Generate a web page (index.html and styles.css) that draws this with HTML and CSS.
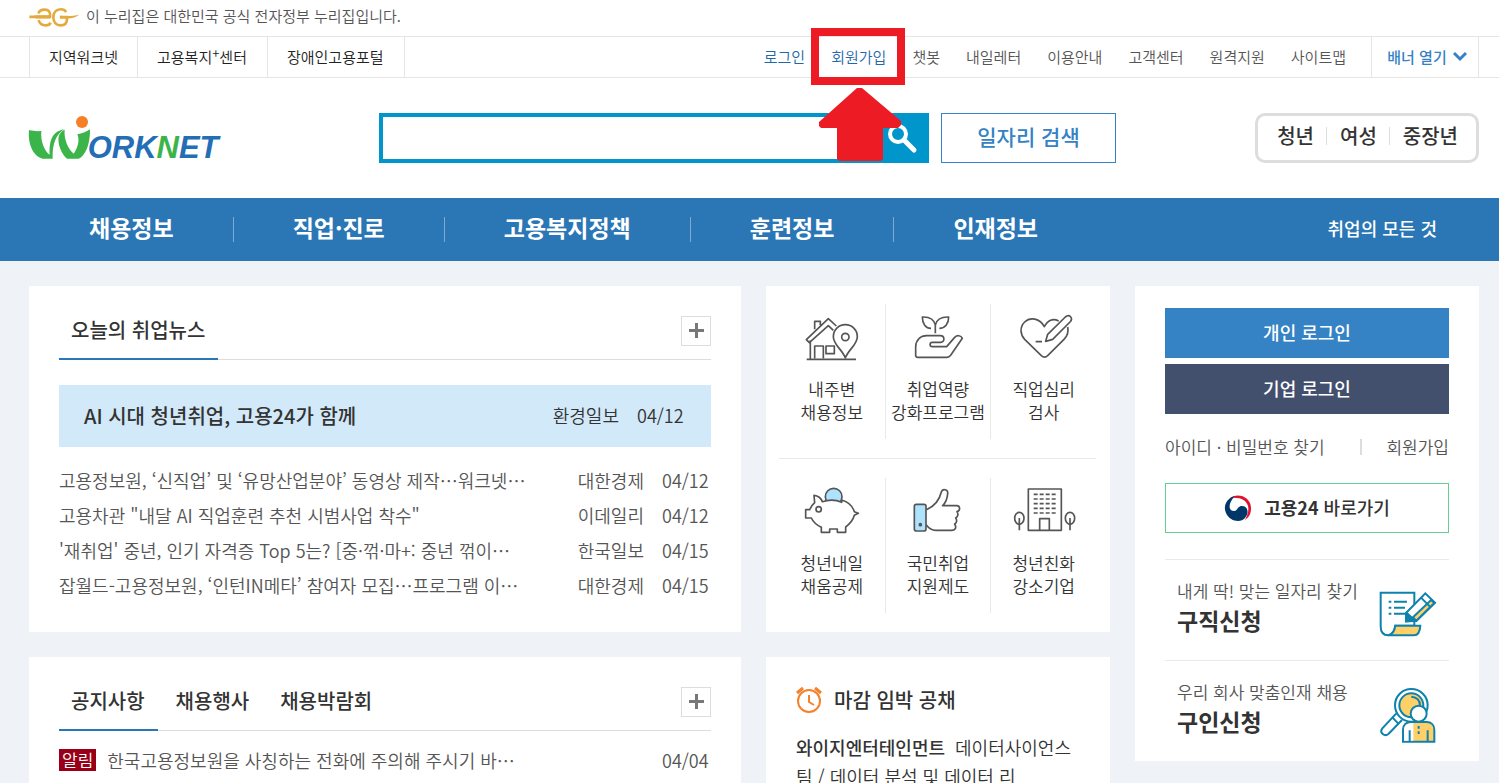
FILE: index.html
```html
<!DOCTYPE html>
<html lang="ko">
<head>
<meta charset="utf-8">
<meta name="viewport" content="width=device-width, initial-scale=1">
<title>워크넷</title>
<link rel="stylesheet" href="styles.css">
</head>
<body>
<div class="official wrap">
  <svg class="official-mark" viewBox="87 20 153 64" aria-hidden="true">
    <g fill="none" stroke="#e3aa3c" stroke-width="8">
      <path d="M87 50H150C152 36 146 28 134 28C122 28 116 34 115 40M115 60C118 70 127 76 137 76C144 76 149 73 152 68"/>
      <path d="M199 35C195 29 190 27 183 27C168 27 160 38 160 51C160 66 169 76 182 76C195 76 202 68 202 54V51H180"/>
    </g>
    <path d="M180 47C205 49 225 47 239 43C230 51 215 56 200 55H180ZM87 50L110 45H150V55H110Z" fill="#e3aa3c"/>
  </svg>
  <p class="official-text">이 누리집은 대한민국 공식 전자정부 누리집입니다.</p>
</div>

<div class="utility">
  <div class="wrap utility-inner">
    <ul class="family">
      <li><a href="#">지역워크넷</a></li>
      <li><a href="#">고용복지<sup>+</sup>센터</a></li>
      <li><a href="#">장애인고용포털</a></li>
    </ul>
    <ul class="util-links">
      <li><a class="accent" href="#">로그인</a></li>
      <li class="marked"><a class="accent" href="#">회원가입</a>
        <svg class="callout" viewBox="0 0 94 134" aria-hidden="true">
          <path d="M4 4H90V53H4Z" fill="none" stroke="#ed1c24" stroke-width="8"/>
          <path d="M46 60H51L90 93V97L87 100H72V131L70 133H28L26 131V100H10L8 98V94Z" fill="#ed1c24"/>
        </svg>
      </li>
      <li><a href="#">챗봇</a></li>
      <li><a href="#">내일레터</a></li>
      <li><a href="#">이용안내</a></li>
      <li><a href="#">고객센터</a></li>
      <li><a href="#">원격지원</a></li>
      <li><a href="#">사이트맵</a></li>
    </ul>
    <button class="banner-toggle" type="button">배너 열기
      <svg viewBox="0 0 14 10" aria-hidden="true"><path d="M1 1L7 7L13 1" fill="none" stroke="#3582c4" stroke-width="3"/></svg>
    </button>
  </div>
</div>

<header class="header wrap">
  <a class="brand" href="#" aria-label="WORKNET">
    <svg viewBox="87 345 573 138" aria-hidden="true">
      <g fill="#3bb54a">
        <path d="M87 390C98 393 112 394 124 393C121 425 134 454 149 464C148 430 151 396 192 388C170 402 156 430 158 476H128C98 468 83 430 87 390Z"/>
        <path d="M176 410C179 399 186 392 194 389C191 418 205 447 221 461C235 442 239 418 232 403C246 401 258 396 270 388C271 430 257 468 236 476H201C184 462 172 430 176 410Z"/>
      </g>
      <circle cx="246" cy="366" r="18" fill="#f58025"/>
      <text class="brand-type" x="263" y="474"><tspan>ORK</tspan><tspan class="brand-green">N</tspan><tspan>ET</tspan></text>
    </svg>
  </a>
  <form class="search" role="search">
    <input type="search" aria-label="통합검색">
    <button type="button" aria-label="검색">
      <svg viewBox="0 0 28 28" aria-hidden="true"><circle cx="10" cy="10" r="8" fill="none" stroke="#fff" stroke-width="4"/><path d="M16 16L26 26" stroke="#fff" stroke-width="5" stroke-linecap="round"/></svg>
    </button>
  </form>
  <a class="job-search" href="#">일자리 검색</a>
  <ul class="audience">
    <li><a href="#">청년</a></li>
    <li><a href="#">여성</a></li>
    <li><a href="#">중장년</a></li>
  </ul>
</header>

<nav class="gnb">
  <div class="wrap gnb-inner">
    <ul class="gnb-list">
      <li><a href="#">채용정보</a></li>
      <li><a href="#">직업·진로</a></li>
      <li><a href="#">고용복지정책</a></li>
      <li><a href="#">훈련정보</a></li>
      <li><a href="#">인재정보</a></li>
    </ul>
    <a class="gnb-all" href="#">취업의 모든 것</a>
  </div>
</nav>

<main class="main wrap">
  <section class="card news">
    <div class="tabs">
      <h2 class="tab active"><a href="#">오늘의 취업뉴스</a></h2>
      <button class="more" type="button" aria-label="취업뉴스 더보기"></button>
    </div>
    <a class="featured" href="#">
      <strong>AI 시대 청년취업, 고용24가 함께</strong><span>환경일보</span><span class="date">04/12</span>
    </a>
    <ul class="news-list">
      <li><a href="#">고용정보원, ‘신직업’ 및 ‘유망산업분야’ 동영상 제작…워크넷…</a><span>대한경제</span><span class="date">04/12</span></li>
      <li><a href="#">고용차관 "내달 AI 직업훈련 추천 시범사업 착수"</a><span>이데일리</span><span class="date">04/12</span></li>
      <li><a href="#">'재취업' 중년, 인기 자격증 Top 5는? [중·꺾·마+: 중년 꺾이…</a><span>한국일보</span><span class="date">04/15</span></li>
      <li><a href="#">잡월드-고용정보원, ‘인턴IN메타’ 참여자 모집…프로그램 이…</a><span>대한경제</span><span class="date">04/15</span></li>
    </ul>
  </section>

  <section class="card quick" aria-label="바로가기">
    <ul class="quick-row">
      <li><a href="#">
        <svg class="quick-icon" viewBox="102 69 168 150" aria-hidden="true">
          <path d="M110 208H258M121 151V208M134 205V168H160V205M168 168H193V191H168ZM134 118V94H151V106M190 121L175 107L118 158L109 149L175 86L199 108"/>
          <path d="M226 204C218 180 190 164 190 140A36 36 0 0 1 262 140C262 164 234 180 226 204Z"/>
          <circle cx="226" cy="141" r="11"/>
        </svg>내주변<br>채용정보</a></li>
      <li><a href="#">
        <svg class="quick-icon" viewBox="420 69 168 150" aria-hidden="true">
          <path d="M496 130V105C492 88 480 80 457 81C457 101 467 115 483 115M496 105C500 88 512 80 536 81C536 101 525 115 508 115"/>
          <path d="M443 202H531C536 202 539 200 542 196L577 145C573 135 561 135 554 142L530 170H487C478 170 478 157 487 157H512C525 157 525 137 511 137H470C448 138 437 153 437 172V196Q437 202 443 202Z"/>
        </svg>취업역량<br>강화프로그램</a></li>
      <li><a href="#">
        <svg class="quick-icon" viewBox="738 69 168 150" aria-hidden="true">
          <path d="M866 93C849 84 833 90 823 110C810 84 780 80 764 96C748 112 751 134 764 148L814 197Q824 206 833 197L882 148C892 138 896 124 893 111M797 155H816"/>
          <path d="M827 154L833 133L886 81C898 71 911 84 900 96L848 148Z"/>
        </svg>직업심리<br>검사</a></li>
    </ul>
    <ul class="quick-row">
      <li><a href="#">
        <svg class="quick-icon" viewBox="102 81 168 150" aria-hidden="true">
          <circle cx="191" cy="110" r="25" fill="#aee2fd"/>
          <path fill="#fff" d="M215 120C240 127 249 142 253 155L265 160L253 166C249 181 239 192 227 201V217H202V207H179V217H154V202C140 195 129 185 124 174H107V149H119C122 141 126 135 134 128L132 106C144 107 153 114 157 125C175 119 198 119 215 127Z"/>
          <circle cx="146" cy="148" r="8"/>
        </svg>청년내일<br>채움공제</a></li>
      <li><a href="#">
        <svg class="quick-icon" viewBox="420 81 168 150" aria-hidden="true">
          <rect x="433" y="133" width="35" height="80" rx="6" fill="#aee2fd"/>
          <path d="M469 149C491 140 508 121 514 96C518 84 535 88 533 101C532 115 525 130 518 137H560C572 138 571 152 561 155C566 163 563 171 557 174C562 181 560 189 554 192C560 202 557 211 546 211H497C486 211 476 204 469 195"/>
          <circle cx="451" cy="194" r="3"/>
        </svg>국민취업<br>지원제도</a></li>
      <li><a href="#">
        <svg class="quick-icon" viewBox="738 81 168 150" aria-hidden="true">
          <path d="M775 211V87H874V211ZM809 211V176H838V211"/>
          <path stroke-dasharray="12 6" d="M791 103H858M791 117H858M791 131H858M791 145H858M791 159H858"/>
          <ellipse cx="748" cy="175" rx="14" ry="18"/><ellipse cx="900" cy="175" rx="14" ry="18"/>
          <path d="M748 174V211M900 174V211"/>
        </svg>청년친화<br>강소기업</a></li>
    </ul>
  </section>

  <aside class="card side">
    <a class="login" href="#">개인 로그인</a>
    <a class="login corporate" href="#">기업 로그인</a>
    <div class="account"><a href="#">아이디 · 비밀번호 찾기</a><a class="join" href="#">회원가입</a></div>
    <a class="go24" href="#">
      <svg viewBox="0 0 28 28" aria-hidden="true">
        <path d="M6 4C14-2 27 3 27 14C27 20 25 23 21 26C24 20 25 16 24 12C22 6 17 3 6 4Z" fill="#e60f2d"/>
        <path d="M11 2C2 4-1 13 2 19C6 28 17 29 21 24C26 18 23 12 18 12C13 12 14 17 10 17C4 17 4 9 11 2Z" fill="#003768"/>
      </svg>
      <span><strong>고용24</strong> 바로가기</span>
    </a>
    <a class="apply" href="#">
      <span><small>내게 딱! 맞는 일자리 찾기</small><strong>구직신청</strong></span>
      <svg viewBox="746 124 174 138" aria-hidden="true">
        <g fill="#fff" stroke="#0e82ad" stroke-width="6">
          <path d="M751 129H852V228H795C792 246 784 257 774 257C759 257 751 247 751 230Z"/>
          <path d="M795 228H870C869 246 865 257 851 257H774C786 254 793 244 795 228Z" fill="#ffd068"/>
          <path d="M827 215V190L885 131L914 159L858 214Z"/>
          <path d="M848 203L902 151L912 160L858 213Z" fill="#ffd068"/>
          <path d="M827 215L830 190L854 213Z" fill="#0e82ad"/>
          <path d="M872 144L901 173M775 156H783M791 156H830M775 174H783M791 174H824M775 192H783M791 192H824"/>
        </g>
      </svg>
    </a>
    <a class="apply" href="#">
      <span><small>우리 회사 맞춤인재 채용</small><strong>구인신청</strong></span>
      <svg viewBox="746 412 174 168" aria-hidden="true">
        <g fill="#fff" stroke="#0e82ad" stroke-width="6">
          <path d="M798 491L756 536C746 549 763 563 775 552L815 511"/>
          <path d="M786 503L804 522"/>
          <circle cx="843" cy="467" r="49"/><circle cx="843" cy="467" r="36" fill="#ffd068"/>
          <path d="M843 441C862 443 869 455 869 467" fill="none"/>
          <path d="M818 576V540C818 525 828 517 842 517H889C903 517 912 526 912 540V576Z" fill="#ffd068"/>
          <path d="M821 573V540C821 528 831 520 849 520V573Z" stroke="none"/>
          <circle cx="865" cy="492" r="24"/>
          <path d="M838 576V542M892 576V542M865 529V537M865 545V553" fill="none"/>
        </g>
      </svg>
    </a>
  </aside>

  <section class="card notice">
    <div class="tabs">
      <h2 class="tab active"><a href="#">공지사항</a></h2>
      <h2 class="tab"><a href="#">채용행사</a></h2>
      <h2 class="tab"><a href="#">채용박람회</a></h2>
      <button class="more" type="button" aria-label="공지사항 더보기"></button>
    </div>
    <p class="notice-item"><span class="badge">알림</span><a href="#">한국고용정보원을 사칭하는 전화에 주의해 주시기 바…</a><span class="date">04/04</span></p>
  </section>

  <section class="card deadline">
    <h2>
      <svg viewBox="0 0 26 26" aria-hidden="true"><g fill="none" stroke="#f5822b" stroke-width="2"><circle cx="13" cy="14" r="11"/><path d="M13 8V15L18 18"/><path stroke-width="3" d="M1 6L7 1M19 1L25 6"/></g></svg>
      마감 임박 공채
    </h2>
    <p><strong>와이지엔터테인먼트</strong><a href="#">데이터사이언스팀 / 데이터 분석 및 데이터 리</a></p>
  </section>
</main>
</body>
</html>
```

FILE: styles.css
```css
* { box-sizing: border-box; }
body {
  margin: 0;
  background: #eff3f7;
  color: #333;
  font-family: "Noto Sans CJK KR", "Noto Sans", sans-serif;
  font-size: 15px;
  font-weight: 350;
}
ul, p, h2 { margin: 0; padding: 0; list-style: none; }
a { color: inherit; text-decoration: none; }
button, input { font: inherit; }
svg { display: block; flex: none; overflow: visible; }
.wrap { padding-left: 29px; padding-right: 20px; }

.official { display: flex; align-items: center; gap: 6px; height: 36px; padding-bottom: 5px; background: #fff; color: #555; }
.official-mark { width: 51px; height: 21px; margin-top: 3px; }

.utility { border-top: 1px solid #e5e5e5; border-bottom: 1px solid #e5e5e5; background: #fff; }
.utility-inner { display: flex; height: 40px; line-height: 40px; white-space: nowrap; }
.family { display: flex; border-left: 1px solid #e5e5e5; }
.family li { padding: 0 19px; border-right: 1px solid #e5e5e5; color: #222; }
.family li + li { padding: 0 20px 0 19px; }
.family sup { font-size: 13px; line-height: 0; vertical-align: 5px; }
.util-links { display: flex; gap: 26px; margin-left: auto; padding-right: 25px; color: #555; }
.accent { color: #1f69ab; }
.marked { position: relative; }
.callout { position: absolute; z-index: 2; top: -9px; left: 50%; width: 94px; height: 134px; margin-left: -48px; pointer-events: none; }
.banner-toggle { display: flex; align-items: center; justify-content: center; gap: 6px; width: 108px; padding: 0 0 0 4px; border: 0; border-left: 1px solid #e5e5e5; border-right: 1px solid #e5e5e5; background: none; color: #3582c4; font-weight: 500; }
.banner-toggle svg { width: 14px; height: 10px; }

.header { display: flex; align-items: center; height: 120px; background: #fff; }
.brand { flex: 0 0 350px; }
.brand svg { width: 191px; height: 46px; }
.brand-type { fill: #246eb5; font: italic bold 93px "Liberation Sans", sans-serif; }
.brand-green { fill: #3bb54a; }
.search { display: flex; flex: 0 1 550px; height: 50px; border: 4px solid #0096cc; }
.search input { flex: 1; min-width: 0; padding: 0 12px; border: 0; outline: 0; background: #fff; }
.search button { display: grid; place-items: center; width: 46px; padding: 0; border: 0; background: #0096cc; }
.search button svg { width: 28px; height: 28px; }
.job-search { flex: 0 0 175px; height: 50px; margin-left: 12px; border: 1px solid #3582c4; color: #3582c4; font-size: 21px; font-weight: 500; line-height: 44px; text-align: center; }
.audience { display: flex; align-items: center; justify-content: center; height: 50px; margin-left: auto; padding: 0 6px 4px; border: 3px solid #ddd; border-radius: 10px; font-size: 20px; font-weight: 500; line-height: 18px; white-space: nowrap; }
.audience li { padding: 0 12px 0 13px; }
.audience li + li { border-left: 1px solid #ddd; }

.gnb { background: #2b76b5; color: #fff; }
.gnb-inner { display: flex; align-items: center; height: 63px; }
.gnb-list { display: flex; font-size: 23px; font-weight: 700; line-height: 20px; white-space: nowrap; }
.gnb-list li { height: 25px; padding: 0 59px; }
.gnb-list li:first-child { padding-left: 60px; }
.gnb-list li + li { border-left: 1px solid #7faad2; }
.gnb-all { margin-left: auto; padding: 0 42px 3px 0; font-size: 18px; font-weight: 500; }

.main { display: grid; grid-template-columns: 712fr 344fr 344fr; grid-template-rows: auto auto; gap: 25px; align-items: start; padding-top: 25px; }
.card { min-width: 0; background: #fff; }
.news, .notice { padding: 0 30px 29px; }
.tabs { display: flex; align-items: center; gap: 6px; height: 74px; padding-top: 16px; border-bottom: 1px solid #ddd; }
.tab { height: 58px; padding: 0 13px 0 12px; font-size: 20px; font-weight: 500; line-height: 56px; white-space: nowrap; }
.tab.active { border-bottom: 2px solid #2b76b5; }
.more { width: 30px; height: 30px; margin: 0 0 0 auto; border: 1px solid #ddd; background: linear-gradient(#777, #777) center / 15px 3px no-repeat, linear-gradient(#777, #777) center / 3px 15px no-repeat, #fff; }
.featured { display: flex; align-items: center; gap: 18px; height: 62px; margin: 25px 0 16px; padding: 0 25px 2px; background: #d2e9f9; font-size: 18px; }
.featured strong { flex: 1; font-size: 20px; font-weight: 500; }
.news-list li { display: flex; gap: 18px; color: #555; font-size: 18px; line-height: 34px; height: 35px; white-space: nowrap; }
.news-list a { flex: 1; min-width: 0; overflow: hidden; }
.date { width: 49px; }

.quick { padding: 18px 14px 19px 13px; }
.quick-row { display: grid; grid-template-columns: repeat(3, 1fr); min-height: 135px; }
.quick-row + .quick-row { position: relative; margin-top: 39px; }
.quick-row + .quick-row::before { content: ""; position: absolute; top: -20px; left: 0; right: 0; height: 1px; background: #e9e9e9; }
.quick-row li { padding-top: 9px; font-size: 17px; line-height: 23px; text-align: center; white-space: nowrap; }
.quick-row li + li { border-left: 1px solid #e9e9e9; }
.quick-icon { width: 56px; height: 50px; margin: 0 auto 14px; fill: none; stroke: #555; stroke-width: 5; stroke-linejoin: round; }

.side { grid-row: span 2; padding: 22px 30px 0; }
.login { display: block; height: 50px; margin-bottom: 6px; background: #3582c4; color: #fff; font-size: 18px; font-weight: 500; line-height: 48px; text-align: center; }
.corporate { margin-bottom: 0; background: #42506e; }
.account { display: flex; justify-content: space-between; align-items: center; padding: 25px 0 28px; color: #555; font-size: 17px; line-height: 16px; white-space: nowrap; }
.join { padding-left: 24px; border-left: 2px solid #ddd; }
.go24 { display: flex; align-items: center; justify-content: center; gap: 12px; height: 50px; margin-bottom: 26px; border: 1px solid #62d08f; font-size: 18px; font-weight: 500; }
.go24 svg { width: 28px; height: 28px; }
.go24 span { padding-bottom: 2px; }
.apply { display: flex; align-items: center; justify-content: space-between; height: 101px; padding: 0 12px 8px; border-top: 1px solid #e9e9e9; white-space: nowrap; }
.apply small { display: block; color: #555; font-size: 17px; line-height: 28px; }
.apply strong { display: block; font-size: 23px; font-weight: 700; line-height: 30px; }
.apply svg { width: 58px; margin-top: 16px; }

.notice-item { display: flex; align-items: center; margin-top: 18px; color: #555; font-size: 18px; line-height: 22px; white-space: nowrap; }
.badge { margin-right: 11px; padding: 0 3px; background: #990017; color: #fff; font-size: 17px; }
.notice-item .date { margin-left: auto; }
.deadline { padding: 28px 30px 20px; }
.deadline h2 { display: flex; align-items: center; gap: 12px; font-size: 20px; font-weight: 500; line-height: 30px; }
.deadline h2 svg { width: 26px; height: 26px; }
.deadline p { margin-top: 18px; font-size: 18px; line-height: 29px; word-break: break-all; }
.deadline p strong { margin-right: 10px; font-weight: 500; }
```
